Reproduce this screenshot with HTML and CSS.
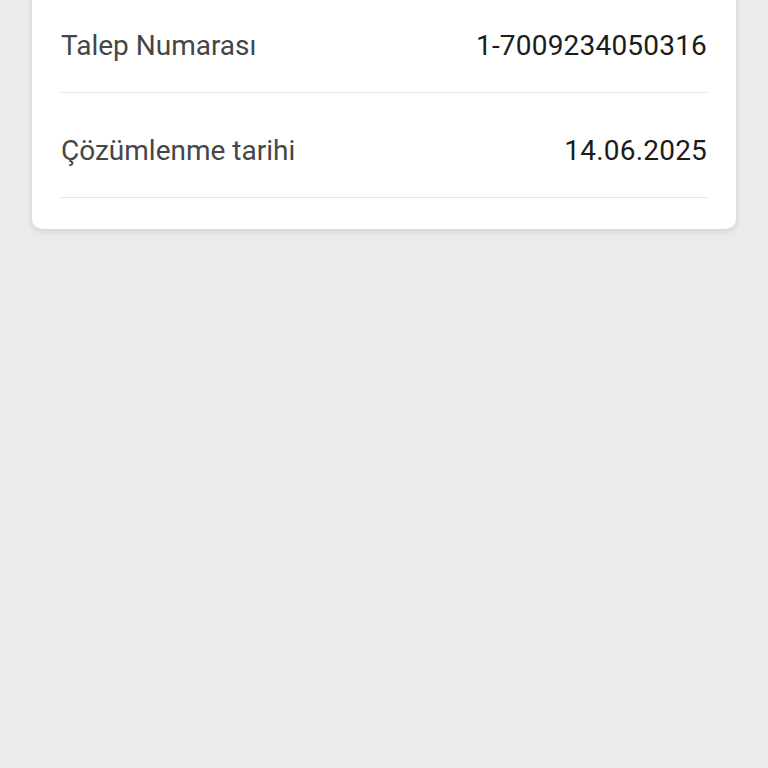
FILE: index.html
```html
<!DOCTYPE html>
<html lang="tr">
<head>
<meta charset="UTF-8">
<meta name="viewport" content="width=device-width, initial-scale=1.0">
<title>Talep Detayı</title>
<link rel="stylesheet" href="styles.css">
</head>
<body>
    <div class="card">
        <div class="row">
            <span class="label">Talep Numarası</span>
            <span class="value">1-7009234050316</span>
        </div>
        <div class="row">
            <span class="label">Çözümlenme tarihi</span>
            <span class="value">14.06.2025</span>
        </div>
    </div>
</body>
</html>
```

FILE: styles.css
```css
body {
    font-family: Roboto, "Noto Sans", sans-serif;
    margin: 0;
    padding: 0;
    background-color: #ebebeb;
    height: 100vh;
    overflow: hidden;
}
.card {
    margin: -12px 32px 0;
    padding: 0 29px 31px;
    background-color: #ffffff;
    border-radius: 10px;
    box-shadow: 0 2px 6px rgba(0, 0, 0, 0.12);
}
.row {
    display: flex;
    justify-content: space-between;
    align-items: center;
    padding: 42px 0 30px;
    border-bottom: 1px solid #e4e4e4;
    font-size: 28px;
    line-height: 32px;
}
.label {
    color: #464646;
}
.value {
    color: #1c1c1c;
    letter-spacing: 0.2px;
}
```
